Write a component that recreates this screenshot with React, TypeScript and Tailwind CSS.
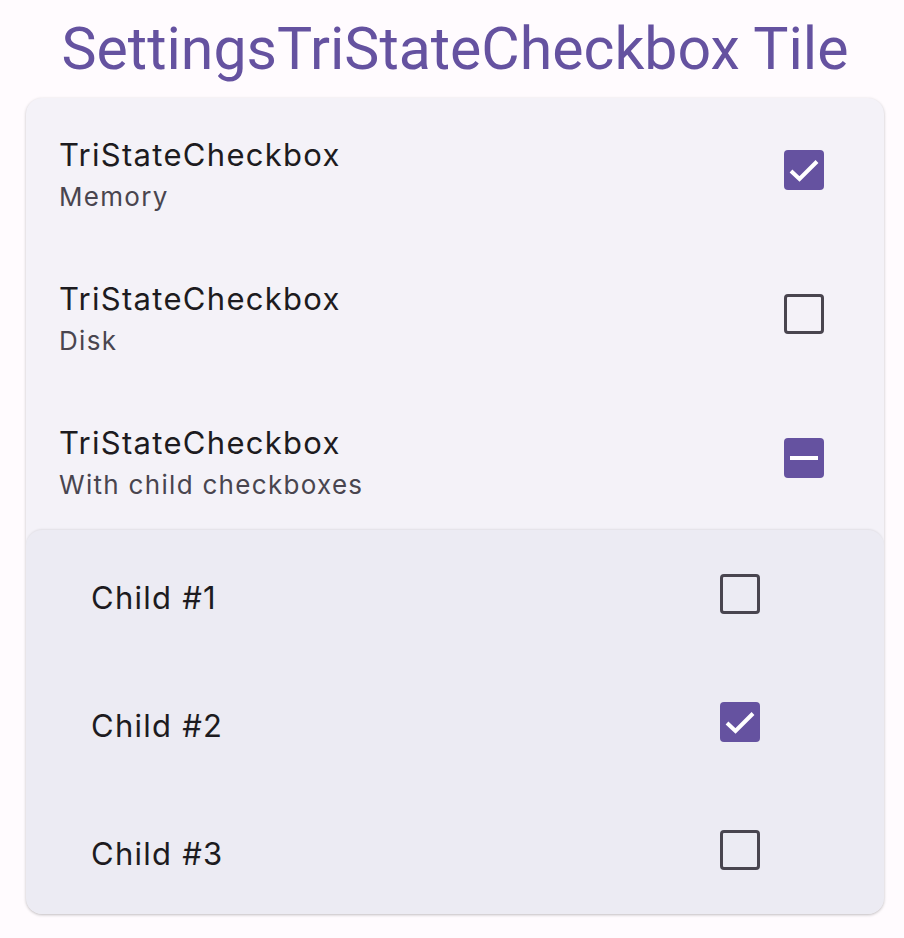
import { useState } from 'react';

type TriState = 'checked' | 'unchecked' | 'indeterminate';

const Box = ({ state, onClick }: { state: TriState; onClick?: () => void }) => {
  if (state === 'unchecked') {
    return (
      <button
        onClick={onClick}
        className="w-[40px] h-[40px] rounded-[4px] border-[3px] border-[#49454f] bg-transparent"
      />
    );
  }
  return (
    <button
      onClick={onClick}
      className="w-[40px] h-[40px] rounded-[4px] bg-[#6552a0] flex items-center justify-center"
    >
      {state === 'checked' ? (
        <svg width="40" height="40" viewBox="0 0 40 40" fill="none">
          <path d="M7 21l8.5 8L33 11.5" stroke="white" strokeWidth="4" />
        </svg>
      ) : (
        <div className="w-[28px] h-[4px] bg-white" />
      )}
    </button>
  );
};

const App = () => {
  const [memory, setMemory] = useState(true);
  const [disk, setDisk] = useState(false);
  const [children, setChildren] = useState([false, true, false]);

  const parentState: TriState = children.every(Boolean)
    ? 'checked'
    : children.some(Boolean)
    ? 'indeterminate'
    : 'unchecked';

  const toggleParent = () => {
    const next = parentState !== 'checked';
    setChildren(children.map(() => next));
  };

  const rows = [
    { title: 'TriStateCheckbox', subtitle: 'Memory', state: (memory ? 'checked' : 'unchecked') as TriState, onClick: () => setMemory(!memory) },
    { title: 'TriStateCheckbox', subtitle: 'Disk', state: (disk ? 'checked' : 'unchecked') as TriState, onClick: () => setDisk(!disk) },
    { title: 'TriStateCheckbox', subtitle: 'With child checkboxes', state: parentState, onClick: toggleParent },
  ];

  return (
    <div className="min-h-screen bg-[#fffbfe] font-['Inter','Noto_Sans',sans-serif]">
      <div className="h-[98px] flex items-center justify-center">
        <h1 className="font-['Roboto',sans-serif] text-[59px] leading-none text-[#6552a0] pb-[2px] pl-[6px]">
          SettingsTriStateCheckbox Tile
        </h1>
      </div>

      <div className="ml-[26px] mr-[20px] rounded-[16px] bg-[#f4f2f8] shadow-[0_1px_3px_rgba(0,0,0,0.25)] overflow-hidden">
        {rows.map((row, i) => (
          <div key={i} className="h-[144px] flex items-center pl-[33px] pr-[60px]">
            <div className="flex-1 flex flex-col pt-[12px]">
              <span className="text-[31px] leading-[42px] text-[#1d1b20] tracking-[1.3px]">{row.title}</span>
              <span className="text-[26px] leading-[42px] text-[#49454f] tracking-[1.3px]">{row.subtitle}</span>
            </div>
            <Box state={row.state} onClick={row.onClick} />
          </div>
        ))}

        <div className="rounded-[16px] bg-[#ecebf3] shadow-[0_-1px_2px_rgba(0,0,0,0.08)]">
          {children.map((c, i) => (
            <div key={i} className="h-[128px] flex items-center pl-[65px] pr-[124px]">
              <span className="flex-1 text-[31px] text-[#1d1b20] tracking-[1.25px] pt-[8px]">Child #{i + 1}</span>
              <Box
                state={c ? 'checked' : 'unchecked'}
                onClick={() => setChildren(children.map((v, j) => (j === i ? !v : v)))}
              />
            </div>
          ))}
        </div>
      </div>
    </div>
  );
};

export default App;
